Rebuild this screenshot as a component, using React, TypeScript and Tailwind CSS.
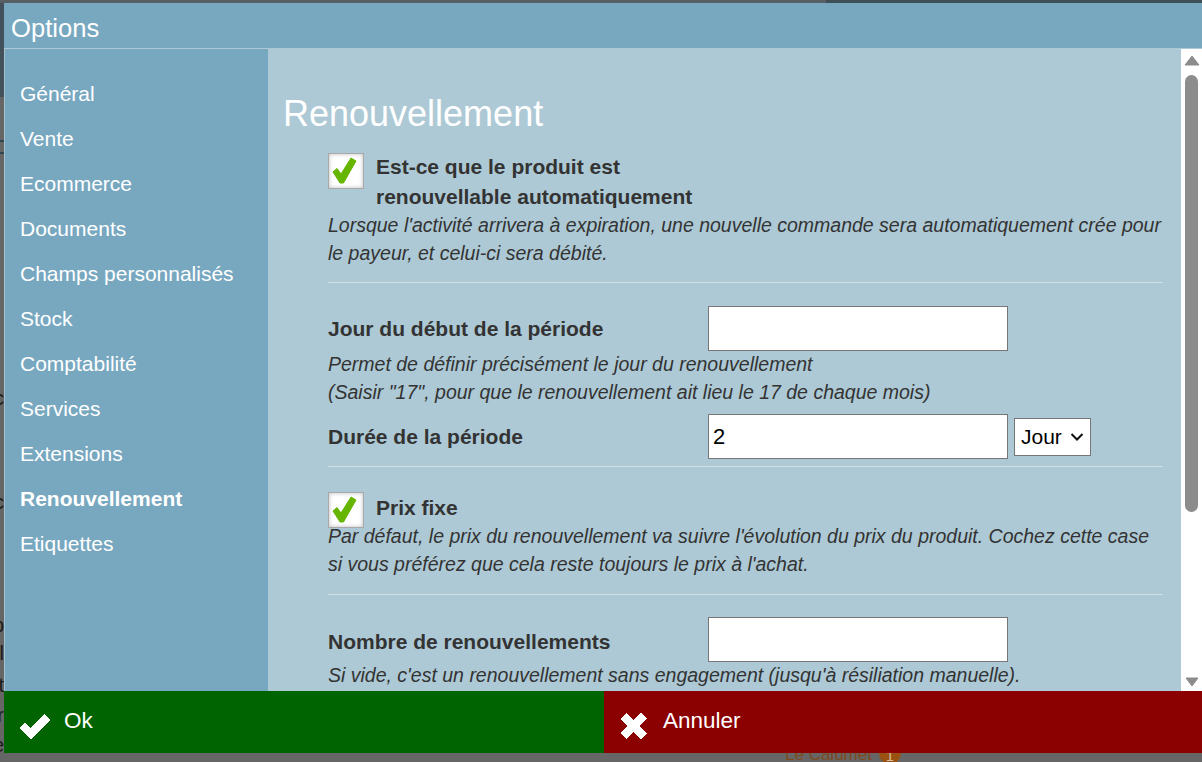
const menu = ['Général', 'Vente', 'Ecommerce', 'Documents', 'Champs personnalisés', 'Stock', 'Comptabilité', 'Services', 'Extensions', 'Renouvellement', 'Etiquettes'];

function CheckBox() {
  return (
    <div className="w-[36px] h-[36px] shrink-0 border border-[#a9a9a9] bg-white shadow-[inset_0_0_4px_#bbb]">
      <svg width="34" height="34" viewBox="0 0 34 34" className="block">
        <path d="M4 18 L8 14.5 L12 20 L22 4 L27 7 L14.5 29 L11 29 Z" fill="#66b500" stroke="#66b500" strokeLinejoin="round" />
      </svg>
    </div>
  );
}

function Label({ className, children }: { className?: string; children: React.ReactNode }) {
  return <div className={`w-[380px] shrink-0 font-bold text-[21px] text-[#333] ${className ?? ''}`}>{children}</div>;
}

function TextBox({ value }: { value?: string }) {
  return (
    <div className="w-[300px] h-[45px] bg-white border border-[#767676] px-[4px] flex items-center text-[22px] text-black">{value}</div>
  );
}

function Note({ className, children }: { className?: string; children: React.ReactNode }) {
  return <p className={`italic text-[19.5px] leading-[28px] ${className ?? ''}`}>{children}</p>;
}

// page behind the dialog, only its edges show
function LeftEdge() {
  return (
    <div className="relative w-[4px] shrink-0 overflow-hidden bg-[#666] text-[20px] leading-[24px] text-[#1c1c1c]">
      <div className="h-[94px] bg-[#43525a]" />
      <div className="absolute left-0 top-[137px] w-full h-[2px] bg-[#2f4650]" />
      <div className="absolute left-0 top-[149px] w-full h-[2px] bg-[#2f4650]" />
      <span className="absolute right-0 top-[383px]">c</span>
      <span className="absolute right-0 top-[487px]">c</span>
      <span className="absolute right-0 top-[610px]">p</span>
      <span className="absolute right-0 top-[638px]">l</span>
      <span className="absolute right-0 top-[670px]">t</span>
      <span className="absolute right-0 top-[700px]">r</span>
      <span className="absolute right-0 top-[730px]">e</span>
    </div>
  );
}

export default function App() {
  return (
    <div className="w-[1202px] h-[762px] overflow-hidden bg-[#666] flex flex-col font-['Liberation_Sans',Arial,sans-serif] text-[21px]">
      <div className="h-[3px] shrink-0 flex">
        <div className="w-[826px] bg-[#586065]" />
        <div className="flex-1 bg-[#3d4f57]" />
      </div>
      <div className="flex-1 min-h-0 flex">
        <LeftEdge />
        <div className="flex-1 min-w-0 flex flex-col">
          <div className="h-[46px] shrink-0 bg-[#78a8bf] border-b border-[#acc9d5] pl-[7px] pt-[9px] text-[25.6px] leading-[33px] text-white">Options</div>
          <div className="flex-1 min-h-0 flex">
            <nav className="w-[264px] shrink-0 bg-[#78a8bf] border-l border-[#a4c3d1] pt-[22px] pl-[15px] text-white">
              {menu.map(m => (
                <div key={m} className={`h-[45px] leading-[45px] ${m === 'Renouvellement' ? 'font-bold' : ''}`}>{m}</div>
              ))}
            </nav>
            <main className="flex-1 min-w-0 bg-[#adc9d5] overflow-hidden pl-[15px] pr-[18px] text-[#333]">
              <h1 className="text-[36px] leading-[40px] text-white mt-[45px]">Renouvellement</h1>
              <div className="ml-[45px] mt-[19px]">
                <div className="flex gap-[12px]">
                  <CheckBox />
                  <div className="font-bold leading-[30px] mt-[-1px]">Est-ce que le produit est<br />renouvellable automatiquement</div>
                </div>
                <Note className="mt-[-1px]">Lorsque l'activité arrivera à expiration, une nouvelle commande sera automatiquement crée pour le payeur, et celui-ci sera débité.</Note>
                <div className="border-t border-[#d3e1e6] mt-[15px]" />
                <div className="flex items-center mt-[23px]">
                  <Label>Jour du début de la période</Label>
                  <TextBox />
                </div>
                <Note className="mt-[-1px]">Permet de définir précisément le jour du renouvellement<br />(Saisir "17", pour que le renouvellement ait lieu le 17 de chaque mois)</Note>
                <div className="flex items-center mt-[8px]">
                  <Label>Durée de la période</Label>
                  <TextBox value="2" />
                  <div className="ml-[6px] w-[77px] h-[38px] bg-white border border-[#767676] pl-[6px] pr-[6px] flex items-center justify-between text-[21px] text-black">
                    <span>Jour</span>
                    <svg width="14" height="8" viewBox="0 0 14 8" fill="none" stroke="#111" strokeWidth="2"><path d="M1.5 1 L7 6.5 L12.5 1" /></svg>
                  </div>
                </div>
                <div className="border-t border-[#d3e1e6] mt-[7px]" />
                <div className="flex gap-[12px] mt-[25px]">
                  <CheckBox />
                  <div className="font-bold leading-[30px] mt-[1px]">Prix fixe</div>
                </div>
                <Note className="mt-[-6px]">Par défaut, le prix du renouvellement va suivre l'évolution du prix du produit. Cochez cette case si vous préférez que cela reste toujours le prix à l'achat.</Note>
                <div className="border-t border-[#d3e1e6] mt-[16px]" />
                <div className="flex items-center mt-[22px]">
                  <Label className="mt-[4px]">Nombre de renouvellements</Label>
                  <TextBox />
                </div>
                <Note className="mt-[-1px]">Si vide, c'est un renouvellement sans engagement (jusqu'à résiliation manuelle).</Note>
              </div>
            </main>
            <div className="w-[21px] shrink-0 bg-white flex flex-col items-center pt-[6px] pb-[4px]">
              <svg width="16" height="11" viewBox="0 0 16 11" className="shrink-0"><path d="M8 1 L15 10 L1 10 Z" fill="#8c8c8c" strokeLinejoin="round" stroke="#8c8c8c" /></svg>
              <div className="w-[13px] h-[437px] mt-[9px] rounded-full bg-[#8c8c8c] shrink-0" />
              <div className="flex-1" />
              <svg width="14" height="10" viewBox="0 0 14 10" className="shrink-0"><path d="M1 1 L13 1 L7 9 Z" fill="#8c8c8c" strokeLinejoin="round" stroke="#8c8c8c" /></svg>
            </div>
          </div>
          <div className="h-[62px] shrink-0 flex text-white text-[22.5px]">
            <div className="w-[600px] bg-[#006400] flex pl-[14px] pt-[12px] gap-[12px]">
              <svg width="34" height="28" viewBox="0 0 34 28" className="mt-[10px]" shapeRendering="crispEdges"><path d="M1 15 L7 10 L13 15 L26 1 L32 7 L13 27 Z" fill="#fff" /></svg>
              <span className="leading-[36px]">Ok</span>
            </div>
            <div className="flex-1 bg-[#8b0000] flex pl-[16px] pt-[12px] gap-[16px]">
              <svg width="27" height="26" viewBox="0 0 27 26" className="mt-[10px]" shapeRendering="crispEdges"><path d="M6 0 L13.5 7 L21 0 L27 6 L19.5 13 L27 20 L21 26 L13.5 19 L6 26 L0 20 L7.5 13 L0 6 Z" fill="#fff" /></svg>
              <span className="leading-[36px]">Annuler</span>
            </div>
          </div>
        </div>
      </div>
      <div className="h-[9px] shrink-0 overflow-hidden flex items-start pl-[785px] gap-[7px] text-[17px] leading-[16px] text-[#7d4a1e]">
        <span className="mt-[-6px] shrink-0">Le Calumet</span>
        <span className="w-[22px] h-[22px] shrink-0 mt-[-11px] rounded-full bg-[#9a5212] text-[#d8c0a8] text-[14px] leading-[28px] text-center">1</span>
      </div>
    </div>
  );
}
